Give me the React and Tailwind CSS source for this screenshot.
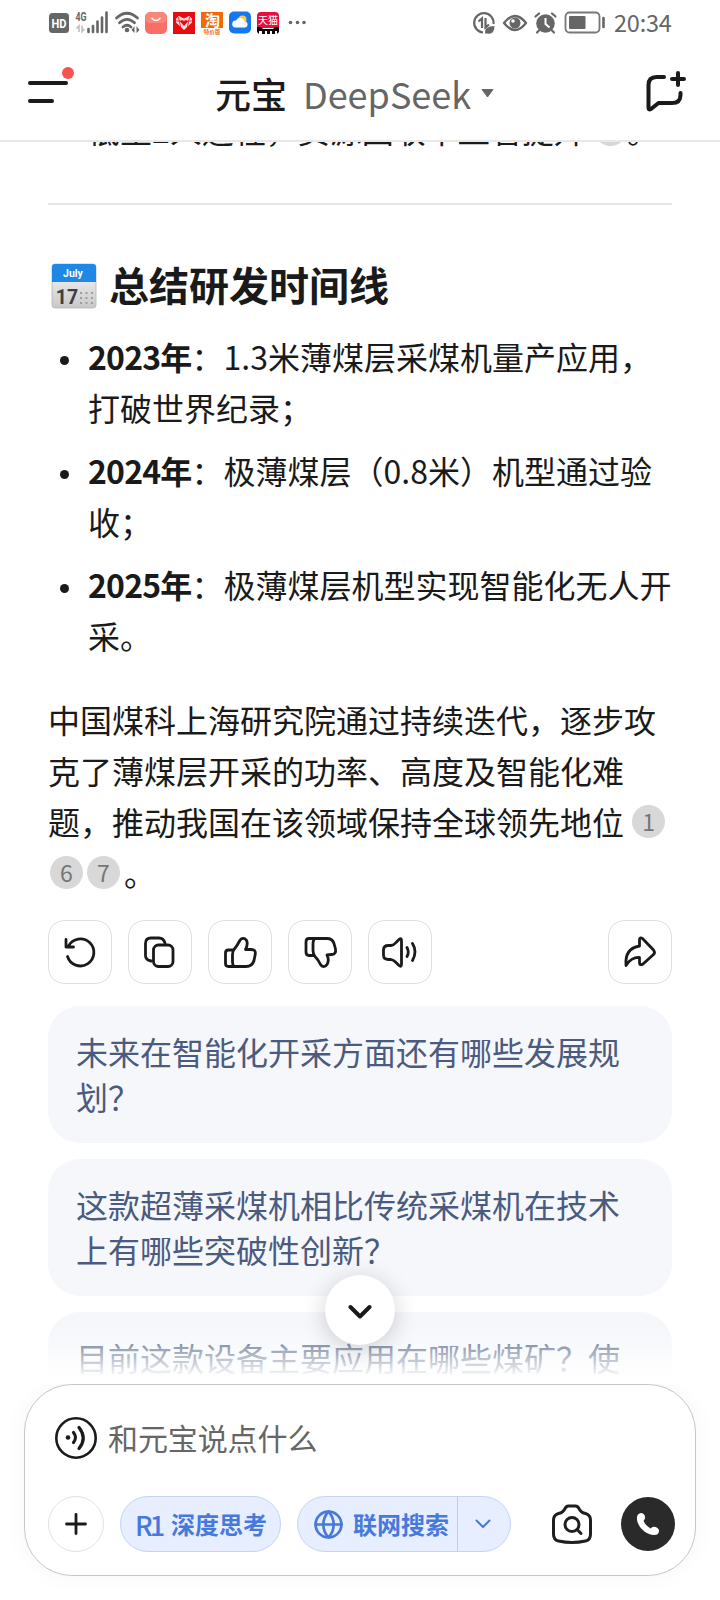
/**
 * Yuanbao chat screen — answer, follow-up suggestions and message composer.
 */

import { Globe } from 'lucide-react';

const TIMELINE = [
  { year: '2023年', lines: ['1.3米薄煤层采煤机量产应用，', '打破世界纪录；'] },
  { year: '2024年', lines: ['极薄煤层（0.8米）机型通过验', '收；'] },
  { year: '2025年', lines: ['极薄煤层机型实现智能化无人开', '采。'] },
];

const SUGGESTIONS = [
  ['未来在智能化开采方面还有哪些发展规', '划？'],
  ['这款超薄采煤机相比传统采煤机在技术', '上有哪些突破性创新？'],
  ['目前这款设备主要应用在哪些煤矿？使'],
];

function StatusBar() {
  return (
    <div className="flex h-[46px] shrink-0 items-center text-[#666]">
      <svg width="284" height="46" viewBox="0 0 284 46" className="ml-[44px]" aria-hidden="true">
        {/* HD */}
        <rect x="5" y="13" width="20" height="20" rx="3.5" fill="#666" />
        <text x="15" y="27.5" fontSize="12.5" fontWeight="700" fill="#fff" textAnchor="middle" fontFamily="Roboto, sans-serif" textLength="15" lengthAdjust="spacingAndGlyphs">HD</text>
        {/* Mobile signal */}
        <text x="31.5" y="21" fontSize="12" fontWeight="700" fill="#666" fontFamily="Roboto, sans-serif" textLength="11" lengthAdjust="spacingAndGlyphs">4G</text>
        <path d="M35 32v-6l-2.5 2.5M38 25.5v6l2.5-2.5" stroke="#c4c4c4" strokeWidth="1.8" fill="none" />
        <path d="M44.5 29v3M49 26v6M53.5 21.5v10.5M58 17.5v14.5M62.5 12.5v19.5" stroke="#666" strokeWidth="2.6" strokeLinecap="round" />
        {/* Wi-Fi */}
        <path d="M72.5 18Q83 8.5 93.5 18M75.5 22.8Q83 16 90.5 22.8M79 27Q83 23.5 87 27" stroke="#666" strokeWidth="2.7" fill="none" strokeLinecap="round" />
        <circle cx="83" cy="30" r="2.3" fill="#666" />
        <path d="M90.5 26v7l-3-3zM92.5 26v7l3-3z" fill="#666" />
        {/* Huawei store */}
        <rect x="101" y="12" width="22" height="22" rx="5.5" fill="#fb6e68" />
        <rect x="101" y="12" width="22" height="11" rx="5.5" fill="#fb8578" />
        <path d="M107.5 18q4.5 5 9 0" stroke="#fff" strokeWidth="1.5" fill="none" />
        {/* Pinduoduo */}
        <rect x="129" y="12" width="22" height="22" fill="#e60c12" />
        <path d="M140 30l-8-7.5v-4l3-2.5 5 2.5 5-2.5 3 2.5v4z" fill="#f8d9da" />
        <path d="M140 26l-4-4.5 2-1.5 2 1.5 2-1.5 2 1.5z" fill="#e60c12" />
        <path d="M134.5 17l2 10M145.5 17l-2 10M132 21l16 0" stroke="#e60c12" strokeWidth=".8" />
        {/* Taobao */}
        <rect x="157" y="12" width="22" height="16" fill="#f26a0a" />
        <text x="168.5" y="25.5" fontSize="15" fontWeight="700" fill="#fff" textAnchor="middle" fontFamily="'Noto Sans CJK SC', sans-serif">淘</text>
        <text x="168" y="33.5" fontSize="5.5" fontWeight="700" fill="#e8781f" textAnchor="middle" fontFamily="'Noto Sans CJK SC', sans-serif">特价版</text>
        {/* Weather */}
        <rect x="185" y="11.5" width="22" height="22" rx="5" fill="#1479ee" />
        <circle cx="198.5" cy="19.5" r="4" fill="#ffc845" />
        <path d="M191.5 27.5a3.5 3.5 0 0 1 .5-7 4.5 4.5 0 0 1 8.5 1 3 3 0 0 1 0 6z" fill="#fff" />
        {/* Tmall */}
        <path d="M213 16q0-4 4-4h14q4 0 4 4v12h-22z" fill="#e60e3c" />
        <text x="224" y="24" fontSize="10" fill="#fff" textAnchor="middle" fontFamily="'Noto Sans CJK SC', sans-serif">天猫</text>
        <path d="M213 27h4l2 2h10l2-2h4v5l-2 2v-3h-2v3h-3v-3h-2v3h-3v-3h-2v3h-3v-3h-3v3l-2-2z" fill="#120407" />
        <g fill="#666">
          <circle cx="246.5" cy="22.5" r="1.8" />
          <circle cx="253.5" cy="22.5" r="1.8" />
          <circle cx="260" cy="22.5" r="1.8" />
        </g>
      </svg>
      <svg width="140" height="46" viewBox="0 0 140 46" className="ml-auto" aria-hidden="true">
        {/* Data saver */}
        <path d="M13 32.5A9.7 9.7 0 1 1 23.5 24" stroke="#666" strokeWidth="2.2" fill="none" />
        <path d="M8.5 21.5l3.5-3v9.5M15.5 18v9.5l3.5-3" stroke="#666" strokeWidth="2.2" fill="none" />
        <path d="M15 33.5q-1-7.5 9.5-7.5 0 9-7.5 7.5z" fill="#666" />
        {/* Eye */}
        <path d="M34 23q11-14 22 0-11 14-22 0z" stroke="#666" strokeWidth="2.4" fill="none" strokeLinejoin="round" />
        <circle cx="45" cy="23" r="5.5" fill="#666" />
        <circle cx="43" cy="21" r="1.8" fill="#fff" />
        {/* Alarm */}
        <circle cx="75.5" cy="23.5" r="9.3" fill="#666" />
        <path d="M75.5 18v6l4 3.5" stroke="#fff" strokeWidth="2" fill="none" />
        <path d="M65.5 16.5l3.5-3M85.5 16.5l-3.5-3M69 30.5l-2 2M82 30.5l2 2" stroke="#666" strokeWidth="2.2" strokeLinecap="round" />
        {/* Battery */}
        <rect x="95.5" y="12.5" width="34" height="20" rx="4" stroke="#777" strokeWidth="1.8" fill="none" />
        <rect x="99" y="16" width="16.5" height="13" rx="1" fill="#666" />
        <path d="M133.5 18v9" stroke="#666" strokeWidth="2.6" strokeLinecap="round" />
      </svg>
      <span className="ml-[4px] w-[106px] text-[23.5px] leading-none tracking-[-0.2px]">20:34</span>
    </div>
  );
}

function Header() {
  return (
    <header className="flex h-[96px] shrink-0 items-center justify-between border-b-2 border-[#e8e8e8] px-[24px]">
      <svg width="56" height="56" viewBox="0 0 56 56" aria-label="菜单">
        <path d="M6 18h36M6 36h22" stroke="#1a1a1a" strokeWidth="4" strokeLinecap="round" />
        <circle cx="44" cy="8" r="6" fill="#fa5151" />
      </svg>
      <h1 className="mr-[11px] flex items-center text-[36px] leading-none whitespace-nowrap">
        <span className="font-medium text-[#1a1a1a]">元宝</span>
        <span className="ml-[16px] text-[#666]">DeepSeek</span>
        <svg width="13" height="9" viewBox="0 0 13 9" className="ml-[10px]" aria-hidden="true">
          <path d="M1 .5h11L6.5 8z" fill="#666" stroke="#666" strokeLinejoin="round" />
        </svg>
      </h1>
      <svg width="56" height="56" viewBox="0 0 56 56" fill="none" stroke="#1a1a1a" strokeWidth="4" strokeLinecap="round" strokeLinejoin="round" aria-label="新对话">
        <path d="M24 12H16.5Q8.5 12 8.5 20V42.5q0 3 2.5 1.5l7.5-6H32q8.5 0 8.5-8V28" />
        <path d="M38 8v12M32 14h12" />
      </svg>
    </header>
  );
}

function CalendarEmoji() {
  return (
    <svg width="46" height="46" viewBox="0 0 46 46" className="shrink-0" role="img" aria-label="日历">
      <defs>
        <linearGradient id="page" x1="0" y1="0" x2="0" y2="1">
          <stop offset="0" stopColor="#fafafa" />
          <stop offset="1" stopColor="#c9c9c9" />
        </linearGradient>
      </defs>
      <rect x="1" y="1" width="44" height="44" rx="3" fill="url(#page)" stroke="#b5b5b5" strokeWidth=".8" />
      <path d="M1 19V4q0-3 3-3h38q3 0 3 3v15z" fill="#1e88e5" />
      <text x="22" y="13.5" fontSize="10.5" fontWeight="700" fill="#fff" textAnchor="middle" fontFamily="Roboto, sans-serif">July</text>
      <text x="16" y="40.5" fontSize="19.5" fontWeight="700" fill="#404040" textAnchor="middle" fontFamily="Roboto, sans-serif">17</text>
      <path d="M29 30h14M29 35h14M29 40h14" stroke="#9e9e9e" strokeWidth="2" strokeDasharray="2 3.5" />
    </svg>
  );
}

function Cite({ n, className = '' }) {
  return (
    <span className={`relative -top-[5px] -my-[4px] inline-flex size-[33px] items-center justify-center rounded-full bg-[#d8d8d8] align-middle text-[23px] leading-none text-[#757575] ${className}`}>
      {n}
    </span>
  );
}

function Answer() {
  return (
    <article className="text-[32px] leading-[51px] whitespace-nowrap text-[#1a1a1a]">
      <p className="-mt-[38px] pl-[40px]">
        低至2人远程，资源回收率显著提升<Cite n="4" className="ml-[8px]" />。
      </p>
      <hr className="mt-[48px] border-t-2 border-[#e8e8e8]" />
      <h2 className="mt-[53px] flex h-[56px] items-center pl-[3px] text-[40px] font-bold">
        <CalendarEmoji />
        <span className="-mt-[4px] ml-[12px]">总结研发时间线</span>
      </h2>
      <ul className="mt-[17px] flex flex-col gap-[12px]">
        {TIMELINE.map(({ year, lines }) => (
          <li key={year} className="flex">
            <span className="mt-[25px] mr-[19px] ml-[12px] size-[9px] shrink-0 rounded-full bg-[#1a1a1a]" />
            <div>
              <strong className="font-bold tracking-[-0.8px]">{year}</strong>：{lines[0]}
              <br />
              {lines[1]}
            </div>
          </li>
        ))}
      </ul>
      <p className="mt-[33px]">
        中国煤科上海研究院通过持续迭代，逐步攻
        <br />
        克了薄煤层开采的功率、高度及智能化难
        <br />
        题，推动我国在该领域保持全球领先地位<Cite n="1" className="ml-[8px]" />
        <br />
        <Cite n="6" className="ml-[2px]" />
        <Cite n="7" className="mr-[4px] ml-[4px]" />。
      </p>
    </article>
  );
}

function ActionButton({ label, className = '', children }) {
  return (
    <button
      type="button"
      aria-label={label}
      className={`flex size-[64px] items-center justify-center rounded-[16px] border border-[#e0e0e0] ${className}`}
    >
      <svg width="38" height="38" viewBox="0 0 38 38" fill="none" stroke="#1a1a1a" strokeWidth="2.8" strokeLinecap="round" strokeLinejoin="round">
        {children}
      </svg>
    </button>
  );
}

function Actions() {
  return (
    <div className="mt-[22px] flex gap-[16px]">
      <ActionButton label="重新生成">
        <path d="M6.5 23.5a13.5 13.5 0 1 0 1-10.5L5.5 14M5 6.5V14h7.5" />
      </ActionButton>
      <ActionButton label="复制">
        <rect x="12.5" y="12" width="19.5" height="21.5" rx="5" />
        <path d="M10.5 28H10q-5.5-1-5.5-5.5V10.5Q4.5 5 10 5h8q4.5 0 6 5" />
      </ActionButton>
      <ActionButton label="赞">
        <path d="M11.5 17H7.5Q4.5 17 4.5 20V30.5q0 3 3 3H25c5 0 7-2.5 8-6l1.2-6c.7-3.5-1-5-4-5H24.5c2-4 2-7.5 .8-9.5-2-2.5-5-2-6.5 .5Q16 13 13 16.5q-1.5 2-1.5 5V29q0 3 1.5 4.5" />
      </ActionButton>
      <ActionButton label="踩">
        <path d="M12 22.5H8Q5 22.5 5 19V9Q5 5.5 8 5.5H26c4 0 6 2 7 5l1.5 5.5c.7 3.5-1 5.5-4 5.5l-4.5 .5c2 4 1.5 7 0 9.5-2 3-5 2.5-6.5 0Q17.5 27 14 23.5q-2-2.5-2-6V11q0-3 1.5-5.5" />
      </ActionButton>
      <ActionButton label="朗读">
        <path d="M2.5 17q0-4.5 5-4.5h2.5q3-.5 5-3l3-3q2.5-2 2.5 1V31q0 3.5-2.5 1.5l-3.5-3.5q-2-2-4.5-2.5H7.5Q2.5 26.5 2.5 22z" />
        <path d="M26 14.5q2.5 4.5 0 9M31.5 10.5q5 8 0 17" />
      </ActionButton>
      <ActionButton label="分享" className="ml-auto">
        <path d="M18.5 13V7q0-3 3-1.5L32.5 17q2 2.5 0 4.5L22 31q-3.5 2-3.5-1.5V24.5q-8-.5-13.5 8Q3.5 15.5 18.5 13z" />
      </ActionButton>
    </div>
  );
}

function Composer() {
  return (
    <footer className="h-[216px] shrink-0 px-[24px]">
      <div className="flex h-[192px] flex-col rounded-[48px] border border-[#c6c6c6] bg-white pt-[32px] pr-[20px] pl-[23px] shadow-[0_0_24px_rgba(0,0,0,0.04)]">
        <div className="flex items-center pl-[7px]">
          <svg width="42" height="42" viewBox="0 0 42 42" fill="none" stroke="#1a1a1a" aria-label="语音输入">
            <circle cx="21" cy="21" r="19.7" strokeWidth="2.6" />
            <circle cx="13" cy="20.5" r="2.3" fill="#1a1a1a" stroke="none" />
            <path d="M18.5 15.5q4 5 0 10M24 10.5q8.5 10.5 0 21" strokeWidth="3.2" strokeLinecap="round" />
          </svg>
          <span className="-mt-[3px] ml-[11px] text-[30px] leading-[42px] tracking-[-0.1px] text-[#666]">和元宝说点什么</span>
        </div>
        <div className="mt-[37px] flex items-center *:shrink-0">
          <button type="button" aria-label="添加" className="flex size-[56px] items-center justify-center rounded-full border border-[#e2e2e2]">
            <svg width="24" height="24" viewBox="0 0 24 24" stroke="#1a1a1a" strokeWidth="2.8" strokeLinecap="round">
              <path d="M2.5 12h19M12 2.5v19" />
            </svg>
          </button>
          <button type="button" className="ml-[16px] flex h-[56px] w-[161px] items-center rounded-full border border-[#c3d5f1] bg-[#e6eeff] pl-[14px] text-[24px] font-bold whitespace-nowrap text-[#4779dc]">
            <span className="w-[36px] shrink-0 text-left text-[27px] leading-none font-medium tracking-[-3px]">R1</span>
            <span className="leading-none">深度思考</span>
          </button>
          <div className="ml-[16px] flex h-[56px] w-[214px] items-center rounded-full border border-[#c3d5f1] bg-[#e6eeff] pl-[15px] text-[24px] font-bold whitespace-nowrap text-[#4779dc]">
            <Globe size={31} strokeWidth={2.1} className="shrink-0" />
            <span className="ml-[9px] leading-none">联网搜索</span>
            <span className="ml-[8px] h-full w-px bg-[#b7cdf0]" />
            <svg width="16" height="10" viewBox="0 0 16 10" className="ml-[17px]" fill="none" stroke="#4779dc" strokeWidth="2" strokeLinecap="round" strokeLinejoin="round">
              <path d="M1.5 1.5L8 8l6.5-6.5" />
            </svg>
          </div>
          <svg width="42" height="42" viewBox="0 0 42 42" className="-mt-px ml-[40px]" fill="none" stroke="#1f1f1f" strokeWidth="3" strokeLinecap="round" strokeLinejoin="round" aria-label="拍照">
            <path d="M2.5 17q0-5 5-6.5 4-.5 6-4 1.5-3.5 4-3.5h7q2.5 0 4 3.5 2 3.5 6 4 5 1.5 5 6.5V31q0 6-5 7-13.5 3-27 0-5-1-5-7z" />
            <circle cx="21" cy="21.5" r="7" />
            <path d="M26 26.5l4 4" />
          </svg>
          <button type="button" aria-label="通话" className="ml-[28px] flex size-[54px] items-center justify-center rounded-full bg-[#2a2a2a]">
            <svg width="24" height="24" viewBox="0 0 24 24" fill="#fff">
              <path d="M1 5Q1.5 1.5 5 1q3 0 4 3.5.5 2.5-1.5 4.5 2 4.5 7 7.5 2-2.5 5-1.5 4 1.5 3.5 4.5-.5 3.5-5 3.5C9 23 0 13 1 5z" />
            </svg>
          </button>
        </div>
      </div>
    </footer>
  );
}

export default function App() {
  return (
    <div className="flex h-[1600px] w-[720px] flex-col overflow-hidden bg-white font-['Noto_Sans_CJK_SC',sans-serif]">
      <StatusBar />
      <Header />
      <main className="relative min-h-0 flex-1 overflow-hidden px-[48px]">
        <Answer />
        <Actions />
        <div className="mt-[22px] flex flex-col gap-[16px]">
          {SUGGESTIONS.map((lines) => (
            <button
              key={lines[0]}
              type="button"
              className="flex h-[137px] shrink-0 flex-col items-start rounded-[32px] bg-[#f5f7fb] px-[28px] pt-[23px] text-left text-[32px] leading-[45px] whitespace-nowrap text-[#4b5b80]"
            >
              {lines.map((line) => (
                <span key={line}>{line}</span>
              ))}
            </button>
          ))}
        </div>
        <div className="absolute inset-x-0 bottom-0 h-[58px] bg-linear-to-b from-white/0 to-white to-90%" />
        <button
          type="button"
          aria-label="滚动到底部"
          className="absolute bottom-[39px] left-[325px] flex size-[70px] items-center justify-center rounded-full bg-white shadow-[0_4px_24px_rgba(0,0,0,0.18)]"
        >
          <svg width="24" height="16" viewBox="0 0 24 16" className="mt-[3px]" fill="none" stroke="#1a1a1a" strokeWidth="4" strokeLinecap="round" strokeLinejoin="round">
            <path d="M2.5 3L12 12.5 21.5 3" />
          </svg>
        </button>
      </main>
      <Composer />
    </div>
  );
}
